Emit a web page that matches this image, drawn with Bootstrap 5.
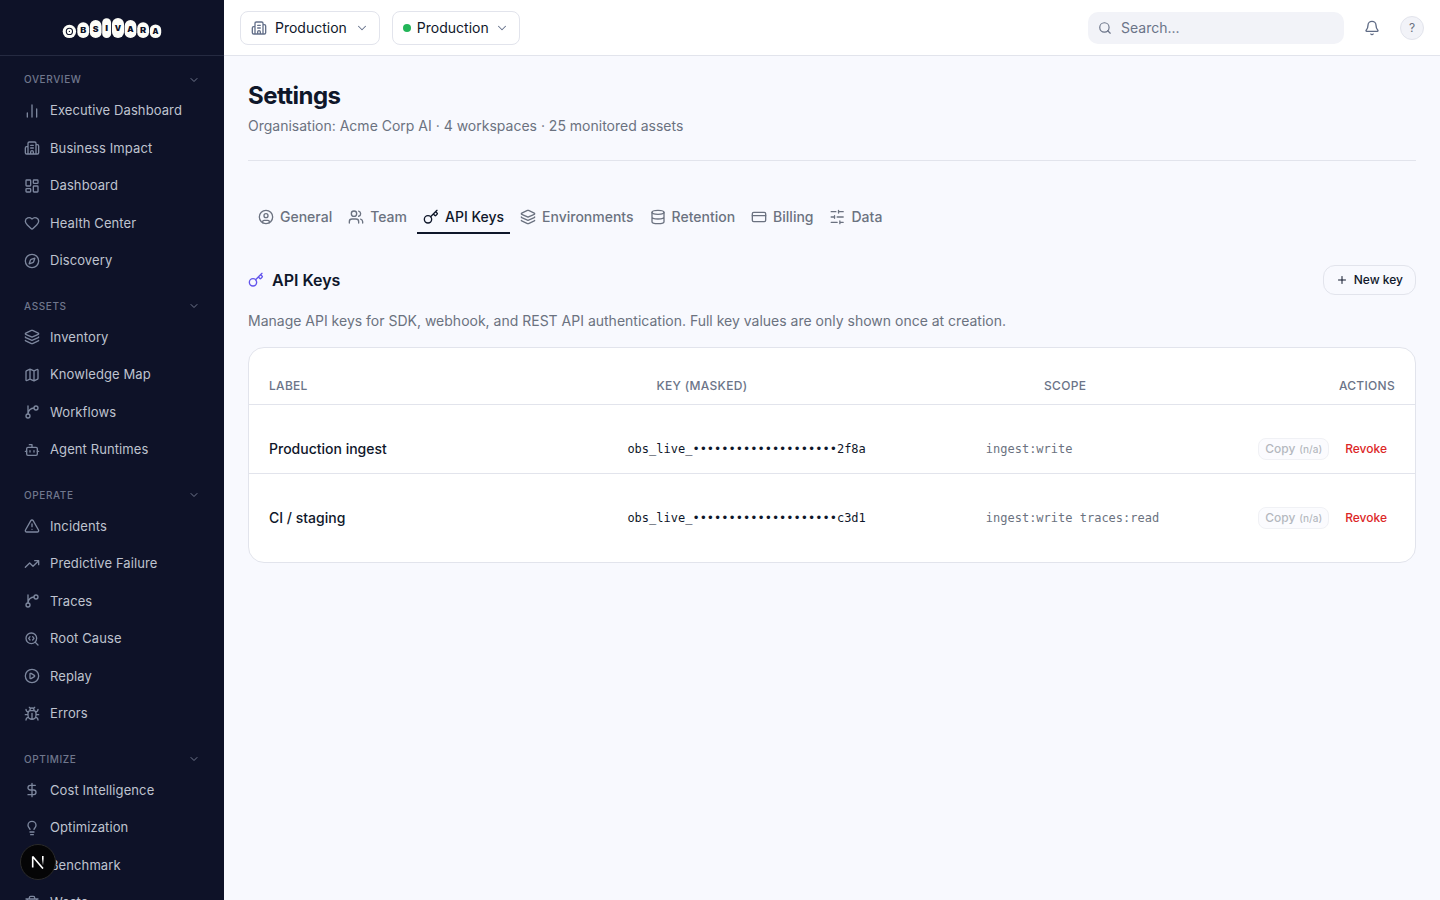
<!DOCTYPE html>
<html lang="en">
<head>
<meta charset="utf-8">
<meta name="viewport" content="width=device-width, initial-scale=1">
<title>Settings · Obsivara</title>
<link href="https://cdn.jsdelivr.net/npm/bootstrap@5.3.0/dist/css/bootstrap.min.css" rel="stylesheet">
<style>
  :root { --ink: #0f172a; --muted: #6b7280; --line: #e2e4ec; --page: #f8f9fe; --side: #0e1228; }
  body { font-family: Inter, "Liberation Sans", sans-serif; font-size: 14px; line-height: 20px; color: var(--ink); background: var(--page); height: 100vh; overflow: hidden; }
  svg.ico { width: 16px; height: 16px; fill: none; stroke: currentColor; stroke-width: 2; stroke-linecap: round; stroke-linejoin: round; flex: none; display: block; }
  .sidebar { width: 224px; background: var(--side); overflow: hidden; }
  .brand { height: 56px; border-bottom: 1px solid #252a41; flex: none; }
  .side-body { padding: 10.5px 12px 0; }
  .side-group + .side-group { margin-top: 14.5px; }
  .side-head { height: 26.5px; padding: 0 12px; font-size: 10px; line-height: 15px; font-weight: 500; letter-spacing: .6px; color: #70778d; }
  .side-head svg.ico { width: 12px; height: 12px; }
  .side-link { height: 35.5px; margin-bottom: 2px; padding: 0 12px; gap: 10px; font-size: 13px; line-height: 19.5px; color: #bfc3cf; text-decoration: none; letter-spacing: .1px; }
  .side-link:last-child { margin-bottom: 0; }
  .side-link svg.ico { color: #7d879e; }
  .dev-badge { position: fixed; left: 20px; top: 844px; width: 36px; height: 36px; border-radius: 50%; background: #050506; border: 1px solid #2b2b2b; z-index: 5; }
  .topbar { height: 56px; background: #fff; border-bottom: 1px solid var(--line); padding: 0 16px; flex: none; }
  .picker { height: 34px; border: 1px solid var(--line); border-radius: 8px; background: #fff; color: var(--ink); font-size: 14px; padding: 0 10px; gap: 8px; }
  .picker + .picker { margin-left: 12px; gap: 6px; }
  .picker svg.ico { color: #64708a; }
  .picker svg.chev { width: 14px; height: 14px; stroke-width: 1.75; }
  .dot { width: 8px; height: 8px; border-radius: 50%; background: #22b558; }
  .search { width: 256px; height: 32px; border-radius: 10px; background: #f2f3f8; color: #6b7488; padding: 0 10px; gap: 9px; }
  .search svg.ico { width: 14px; height: 14px; }
  .topbar svg.bell { margin: 0 20px; color: #5f6b85; }
  .avatar { width: 24px; height: 24px; border-radius: 50%; border: 1px solid var(--line); background: #f2f3f8; color: #6b7280; font-size: 12px; }
  .page { padding: 24px 24px 0; }
  .page-head { border-bottom: 1px solid var(--line); height: 81px; }
  h1 { font-size: 24px; line-height: 32px; font-weight: 700; letter-spacing: -.55px; margin: 0 0 4px; }
  .sub { color: var(--muted); }
  .tabs { margin-top: 40px; padding-left: 4px; gap: 4px; }
  .tab { height: 33px; padding: 0 6px; gap: 6px; color: #6b7280; font-weight: 500; text-decoration: none; border-bottom: 2px solid transparent; }
  .tab.on { color: var(--ink); border-color: var(--ink); }
  h2 { font-size: 16px; line-height: 24px; font-weight: 600; margin: 0; }
  .section-head { margin-top: 31px; height: 30px; }
  .section-head svg.accent { color: #6355ec; }
  .newkey { height: 30px; border: 1px solid var(--line); border-radius: 12px; font-size: 12px; font-weight: 500; padding: 0 12px; gap: 6px; color: var(--ink); background: transparent; }
  .newkey svg.ico { width: 12px; height: 12px; }
  .keys { margin-top: 16px; background: #fff; border: 1px solid var(--line); border-radius: 16px; overflow: hidden; }
  .key-head, .key-row { display: grid; padding: 0 20px; align-items: center; }
  .key-head { grid-template-columns: 387.5px 387.5px 1fr auto; height: 57px; padding-top: 19px; font-size: 12px; font-weight: 500; letter-spacing: .3px; color: #6b7488; border-bottom: 1px solid var(--line); }
  .key-row { grid-template-columns: 358.4px 358.4px 1fr auto; height: 69px; padding-top: 20px; border-bottom: 1px solid var(--line); }
  .key-row:last-child { height: 88px; border: 0; padding-bottom: 20px; }
  .code { font-family: "DejaVu Sans Mono", monospace; font-size: 12px; }
  .copy { width: 71px; height: 22px; border: 1px solid var(--line); border-radius: 8px; background: var(--page); color: #6b7280; font-size: 12px; font-weight: 500; opacity: .5; gap: 4px; }
  .copy span { font-size: 10px; }
  .revoke { color: #dc2626; font-size: 12px; font-weight: 500; padding: 0 8px; }
</style>
</head>
<body class="d-flex">
<svg width="0" height="0" class="position-absolute" aria-hidden="true">
  <symbol id="chev" viewBox="0 0 24 24"><path d="m6 9 6 6 6-6"/></symbol>
  <symbol id="bars" viewBox="0 0 24 24"><path d="M5 21v-6M12 21V3M19 21V9"/></symbol>
  <symbol id="building" viewBox="0 0 24 24"><path d="M10 12h4M10 8h4M14 21v-3a2 2 0 0 0-4 0v3M6 10H4a2 2 0 0 0-2 2v7a2 2 0 0 0 2 2h16a2 2 0 0 0 2-2V9a2 2 0 0 0-2-2h-2M6 21V5a2 2 0 0 1 2-2h8a2 2 0 0 1 2 2v16"/></symbol>
  <symbol id="dash" viewBox="0 0 24 24"><rect width="7" height="9" x="3" y="3" rx="1"/><rect width="7" height="5" x="14" y="3" rx="1"/><rect width="7" height="9" x="14" y="12" rx="1"/><rect width="7" height="5" x="3" y="16" rx="1"/></symbol>
  <symbol id="heart" viewBox="0 0 24 24"><path d="M2 9.5a5.5 5.5 0 0 1 9.591-3.676.56.56 0 0 0 .818 0A5.49 5.49 0 0 1 22 9.5c0 2.29-1.5 4-3 5.5l-5.492 5.313a2 2 0 0 1-3 .019L5 15c-1.5-1.5-3-3.2-3-5.5"/></symbol>
  <symbol id="compass" viewBox="0 0 24 24"><circle cx="12" cy="12" r="10"/><path d="m16.24 7.76-1.804 5.411a2 2 0 0 1-1.265 1.265L7.76 16.24l1.804-5.411a2 2 0 0 1 1.265-1.265z"/></symbol>
  <symbol id="layers" viewBox="0 0 24 24"><path d="M12.83 2.18a2 2 0 0 0-1.66 0L2.6 6.08a1 1 0 0 0 0 1.83l8.58 3.91a2 2 0 0 0 1.66 0l8.58-3.9a1 1 0 0 0 0-1.83zM2 12a1 1 0 0 0 .58.91l8.6 3.91a2 2 0 0 0 1.65 0l8.58-3.9A1 1 0 0 0 22 12M2 17a1 1 0 0 0 .58.91l8.6 3.91a2 2 0 0 0 1.65 0l8.58-3.9A1 1 0 0 0 22 17"/></symbol>
  <symbol id="map" viewBox="0 0 24 24"><path d="M14.106 5.553a2 2 0 0 0 1.788 0l3.659-1.83A1 1 0 0 1 21 4.619v12.764a1 1 0 0 1-.553.894l-4.553 2.277a2 2 0 0 1-1.788 0l-4.212-2.106a2 2 0 0 0-1.788 0l-3.659 1.83A1 1 0 0 1 3 19.381V6.618a1 1 0 0 1 .553-.894l4.553-2.277a2 2 0 0 1 1.788 0zM15 5.764v15M9 3.236v15"/></symbol>
  <symbol id="branch" viewBox="0 0 24 24"><path d="M6 3v12M15 6a9 9 0 0 0-9 9"/><circle cx="18" cy="6" r="3"/><circle cx="6" cy="18" r="3"/></symbol>
  <symbol id="bot" viewBox="0 0 24 24"><path d="M12 8V4H8"/><rect width="16" height="12" x="4" y="8" rx="2"/><path d="M2 14h2M20 14h2M15 13v2M9 13v2"/></symbol>
  <symbol id="alert" viewBox="0 0 24 24"><path d="m21.73 18-8-14a2 2 0 0 0-3.48 0l-8 14A2 2 0 0 0 4 21h16a2 2 0 0 0 1.73-3M12 9v4M12 17h.01"/></symbol>
  <symbol id="trend" viewBox="0 0 24 24"><path d="M16 7h6v6M22 7l-8.5 8.5-5-5L2 17"/></symbol>
  <symbol id="searchcode" viewBox="0 0 24 24"><path d="m13 13.5 2-2.5-2-2.5M21 21l-4.3-4.3M9 8.5 7 11l2 2.5"/><circle cx="11" cy="11" r="8"/></symbol>
  <symbol id="play" viewBox="0 0 24 24"><path d="M9 9.003a1 1 0 0 1 1.517-.859l4.997 2.997a1 1 0 0 1 0 1.718l-4.997 2.997A1 1 0 0 1 9 14.996z"/><circle cx="12" cy="12" r="10"/></symbol>
  <symbol id="bug" viewBox="0 0 24 24"><path d="M12 20v-9M14 7a4 4 0 0 1 4 4v3a6 6 0 0 1-12 0v-3a4 4 0 0 1 4-4zM14.12 3.88 16 2M21 21a4 4 0 0 0-3.81-4M21 5a4 4 0 0 1-3.55 3.97M22 13h-4M3 21a4 4 0 0 1 3.81-4M3 5a4 4 0 0 0 3.55 3.97M6 13H2M8 2l1.88 1.88M9 7.13V6a3 3 0 1 1 6 0v1.13"/></symbol>
  <symbol id="dollar" viewBox="0 0 24 24"><path d="M12 2v20M17 5H9.5a3.5 3.5 0 0 0 0 7h5a3.5 3.5 0 0 1 0 7H6"/></symbol>
  <symbol id="bulb" viewBox="0 0 24 24"><path d="M15 14c.2-1 .7-1.7 1.5-2.5 1-.9 1.5-2.2 1.5-3.5A6 6 0 0 0 6 8c0 1 .2 2.2 1.5 3.5.7.7 1.3 1.5 1.5 2.5M9 18h6M10 22h4"/></symbol>
  <symbol id="gauge" viewBox="0 0 24 24"><path d="m12 14 4-4M3.34 19a10 10 0 1 1 17.32 0"/></symbol>
  <symbol id="trash" viewBox="0 0 24 24"><path d="M10 11v6M14 11v6M19 6v14a2 2 0 0 1-2 2H7a2 2 0 0 1-2-2V6M3 6h18M8 6V4a2 2 0 0 1 2-2h4a2 2 0 0 1 2 2v2"/></symbol>
  <symbol id="search" viewBox="0 0 24 24"><path d="m21 21-4.34-4.34"/><circle cx="11" cy="11" r="8"/></symbol>
  <symbol id="bell" viewBox="0 0 24 24"><path d="M10.268 21a2 2 0 0 0 3.464 0M3.262 15.326A1 1 0 0 0 4 17h16a1 1 0 0 0 .74-1.673C19.41 13.956 18 12.499 18 8A6 6 0 0 0 6 8c0 4.499-1.411 5.956-2.738 7.326"/></symbol>
  <symbol id="user" viewBox="0 0 24 24"><circle cx="12" cy="12" r="10"/><circle cx="12" cy="10" r="3"/><path d="M7 20.662V19a2 2 0 0 1 2-2h6a2 2 0 0 1 2 2v1.662"/></symbol>
  <symbol id="team" viewBox="0 0 24 24"><path d="M16 21v-2a4 4 0 0 0-4-4H6a4 4 0 0 0-4 4v2M16 3.128a4 4 0 0 1 0 7.744M22 21v-2a4 4 0 0 0-3-3.87"/><circle cx="9" cy="7" r="4"/></symbol>
  <symbol id="key" viewBox="0 0 24 24"><path d="m15.5 7.5 2.3 2.3a1 1 0 0 0 1.4 0l2.1-2.1a1 1 0 0 0 0-1.4L19 4M21 2l-9.6 9.6"/><circle cx="7.5" cy="15.5" r="5.5"/></symbol>
  <symbol id="db" viewBox="0 0 24 24"><ellipse cx="12" cy="5" rx="9" ry="3"/><path d="M3 5v14a9 3 0 0 0 18 0V5M3 12a9 3 0 0 0 18 0"/></symbol>
  <symbol id="card" viewBox="0 0 24 24"><rect width="20" height="14" x="2" y="5" rx="2"/><path d="M2 10h20"/></symbol>
  <symbol id="sliders" viewBox="1.2 0 24 24"><path d="M21 4h-7M10 4H3M21 12h-9M8 12H3M21 20h-5M12 20H3M14 2v4M8 10v4M16 18v4"/></symbol>
  <symbol id="plus" viewBox="0 0 24 24"><path d="M5 12h14M12 5v14"/></symbol>
</svg>

<aside class="sidebar d-flex flex-column flex-shrink-0 vh-100">
  <div class="brand d-flex align-items-center justify-content-center">
    <svg width="100" height="22" viewBox="62 17 100 22" role="img" aria-label="Obsivara" font-family="Inter, sans-serif" font-weight="900" font-size="7">
      <g fill="#fdfdf8">
        <rect x="62.7" y="24.7" width="13.4" height="13.4" rx="6.7"/>
        <rect x="77.3" y="22.3" width="11.8" height="15.8" rx="5.9"/>
        <rect x="89.8" y="20.1" width="11.8" height="18" rx="5.9"/>
        <rect x="102.2" y="18.3" width="8.9" height="19.8" rx="4.45"/>
        <rect x="112" y="18" width="12" height="20.1" rx="6"/>
        <rect x="124.6" y="20.1" width="11.8" height="18" rx="5.9"/>
        <rect x="137.2" y="22.3" width="11.8" height="15.8" rx="5.9"/>
        <rect x="149.8" y="24.4" width="11.4" height="13.7" rx="5.7"/>
      </g>
      <circle cx="69.4" cy="31.4" r="3.1" fill="none" stroke="#0e1228" stroke-width="1.1"/>
      <circle cx="69.4" cy="31.4" r=".6" fill="#0e1228"/>
      <g fill="#0e1228">
        <text x="80.2" y="33.1" textLength="6" lengthAdjust="spacingAndGlyphs">B</text>
        <text x="92.8" y="31.8" textLength="5.8" lengthAdjust="spacingAndGlyphs">S</text>
        <text x="105.3" y="30.8" textLength="2.8" lengthAdjust="spacingAndGlyphs">I</text>
        <text x="114.8" y="30.8" textLength="6.4" lengthAdjust="spacingAndGlyphs">V</text>
        <text x="127.3" y="31.9" textLength="6.4" lengthAdjust="spacingAndGlyphs">A</text>
        <text x="140" y="33" textLength="6.2" lengthAdjust="spacingAndGlyphs">R</text>
        <text x="152.5" y="34.3" textLength="6" lengthAdjust="spacingAndGlyphs">A</text>
      </g>
    </svg>
  </div>
  <nav class="side-body">
    <div class="side-group">
      <div class="side-head d-flex align-items-center justify-content-between">OVERVIEW<svg class="ico"><use href="#chev"/></svg></div>
      <a class="side-link d-flex align-items-center"><svg class="ico"><use href="#bars"/></svg>Executive Dashboard</a>
      <a class="side-link d-flex align-items-center"><svg class="ico"><use href="#building"/></svg>Business Impact</a>
      <a class="side-link d-flex align-items-center"><svg class="ico"><use href="#dash"/></svg>Dashboard</a>
      <a class="side-link d-flex align-items-center"><svg class="ico"><use href="#heart"/></svg>Health Center</a>
      <a class="side-link d-flex align-items-center"><svg class="ico"><use href="#compass"/></svg>Discovery</a>
    </div>
    <div class="side-group">
      <div class="side-head d-flex align-items-center justify-content-between">ASSETS<svg class="ico"><use href="#chev"/></svg></div>
      <a class="side-link d-flex align-items-center"><svg class="ico"><use href="#layers"/></svg>Inventory</a>
      <a class="side-link d-flex align-items-center"><svg class="ico"><use href="#map"/></svg>Knowledge Map</a>
      <a class="side-link d-flex align-items-center"><svg class="ico"><use href="#branch"/></svg>Workflows</a>
      <a class="side-link d-flex align-items-center"><svg class="ico"><use href="#bot"/></svg>Agent Runtimes</a>
    </div>
    <div class="side-group">
      <div class="side-head d-flex align-items-center justify-content-between">OPERATE<svg class="ico"><use href="#chev"/></svg></div>
      <a class="side-link d-flex align-items-center"><svg class="ico"><use href="#alert"/></svg>Incidents</a>
      <a class="side-link d-flex align-items-center"><svg class="ico"><use href="#trend"/></svg>Predictive Failure</a>
      <a class="side-link d-flex align-items-center"><svg class="ico"><use href="#branch"/></svg>Traces</a>
      <a class="side-link d-flex align-items-center"><svg class="ico"><use href="#searchcode"/></svg>Root Cause</a>
      <a class="side-link d-flex align-items-center"><svg class="ico"><use href="#play"/></svg>Replay</a>
      <a class="side-link d-flex align-items-center"><svg class="ico"><use href="#bug"/></svg>Errors</a>
    </div>
    <div class="side-group">
      <div class="side-head d-flex align-items-center justify-content-between">OPTIMIZE<svg class="ico"><use href="#chev"/></svg></div>
      <a class="side-link d-flex align-items-center"><svg class="ico"><use href="#dollar"/></svg>Cost Intelligence</a>
      <a class="side-link d-flex align-items-center"><svg class="ico"><use href="#bulb"/></svg>Optimization</a>
      <a class="side-link d-flex align-items-center"><svg class="ico"><use href="#gauge"/></svg>Benchmark</a>
      <a class="side-link d-flex align-items-center"><svg class="ico"><use href="#trash"/></svg>Waste</a>
    </div>
  </nav>
</aside>

<div class="dev-badge d-flex align-items-center justify-content-center">
  <svg width="14" height="14" viewBox="0 0 14 14" fill="none" stroke-width="1.6">
    <defs><linearGradient id="fade" x1="0" y1="0" x2="0" y2="1"><stop offset=".3" stop-color="#fff"/><stop offset="1" stop-color="#fff" stop-opacity="0"/></linearGradient></defs>
    <path d="M1.7 12.5V1.6L12 13.6" stroke="#fff" stroke-linejoin="bevel"/>
    <rect x="11" y="1" width="1.6" height="9.5" fill="url(#fade)"/>
  </svg>
</div>

<div class="flex-grow-1 d-flex flex-column">
  <header class="topbar d-flex align-items-center">
    <button class="picker d-flex align-items-center"><svg class="ico"><use href="#building"/></svg>Production<svg class="ico chev"><use href="#chev"/></svg></button>
    <button class="picker d-flex align-items-center"><span class="dot"></span>Production<svg class="ico chev"><use href="#chev"/></svg></button>
    <div class="search d-flex align-items-center ms-auto"><svg class="ico"><use href="#search"/></svg>Search...</div>
    <svg class="ico bell"><use href="#bell"/></svg>
    <div class="avatar d-flex align-items-center justify-content-center">?</div>
  </header>
  <main class="page">
    <div class="page-head"><h1>Settings</h1><div class="sub">Organisation: Acme Corp AI · 4 workspaces · 25 monitored assets</div></div>
    <nav class="tabs d-flex">
      <a class="tab d-flex align-items-center"><svg class="ico"><use href="#user"/></svg>General</a>
      <a class="tab d-flex align-items-center"><svg class="ico"><use href="#team"/></svg>Team</a>
      <a class="tab on d-flex align-items-center"><svg class="ico"><use href="#key"/></svg>API Keys</a>
      <a class="tab d-flex align-items-center"><svg class="ico"><use href="#layers"/></svg>Environments</a>
      <a class="tab d-flex align-items-center"><svg class="ico"><use href="#db"/></svg>Retention</a>
      <a class="tab d-flex align-items-center"><svg class="ico"><use href="#card"/></svg>Billing</a>
      <a class="tab d-flex align-items-center"><svg class="ico"><use href="#sliders"/></svg>Data</a>
    </nav>
    <div class="section-head d-flex align-items-center justify-content-between">
      <div class="d-flex align-items-center gap-2"><svg class="ico accent"><use href="#key"/></svg><h2>API Keys</h2></div>
      <button class="newkey d-flex align-items-center"><svg class="ico"><use href="#plus"/></svg>New key</button>
    </div>
    <div class="sub mt-3">Manage API keys for SDK, webhook, and REST API authentication. Full key values are only shown once at creation.</div>
    <section class="keys">
      <div class="key-head"><span>LABEL</span><span>KEY (MASKED)</span><span>SCOPE</span><span>ACTIONS</span></div>
      <div class="key-row">
        <span class="fw-medium">Production ingest</span><span class="code">obs_live_••••••••••••••••••••2f8a</span><span class="code sub">ingest:write</span>
        <div class="d-flex align-items-center gap-2"><span class="copy d-flex align-items-center justify-content-center">Copy <span>(n/a)</span></span><span class="revoke">Revoke</span></div>
      </div>
      <div class="key-row">
        <span class="fw-medium">CI / staging</span><span class="code">obs_live_••••••••••••••••••••c3d1</span><span class="code sub">ingest:write traces:read</span>
        <div class="d-flex align-items-center gap-2"><span class="copy d-flex align-items-center justify-content-center">Copy <span>(n/a)</span></span><span class="revoke">Revoke</span></div>
      </div>
    </section>
  </main>
</div>
<script src="https://cdn.jsdelivr.net/npm/bootstrap@5.3.0/dist/js/bootstrap.bundle.min.js"></script>
</body>
</html>
